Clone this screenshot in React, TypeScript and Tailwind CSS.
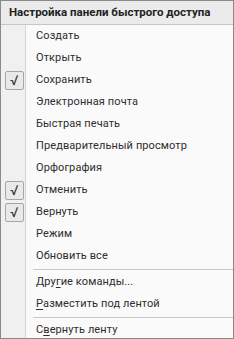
import React from "react";

type Item = { label: React.ReactNode; checked?: boolean } | "sep";

const U = ({ children }: { children: React.ReactNode }) => (
  <span className="underline underline-offset-2">{children}</span>
);

const items: Item[] = [
  { label: "Создать" },
  { label: "Открыть" },
  { label: "Сохранить", checked: true },
  { label: "Электронная почта" },
  { label: "Быстрая печать" },
  { label: "Предварительный просмотр" },
  { label: "Орфография" },
  { label: "Отменить", checked: true },
  { label: "Вернуть", checked: true },
  { label: "Режим" },
  { label: "Обновить все" },
  "sep",
  { label: <>Дру<U>г</U>ие команды...</> },
  { label: <><U>Р</U>азместить под лентой</> },
  "sep",
  { label: <>С<U>в</U>ернуть ленту</> },
];

export default function App() {
  return (
    <div
      className="w-[234px] h-[339px] border border-[#8a8a8a] bg-[#fafafa] flex flex-col overflow-hidden text-[#2e2e2e]"
      style={{ fontFamily: 'Roboto, "Noto Sans", sans-serif' }}
    >
      <div className="h-[24px] shrink-0 bg-[#ebebeb] border-b border-[#c6c6c6] flex items-center pl-[8px] text-[11.5px] font-bold text-[#222] whitespace-nowrap">
        Настройка панели быстрого доступа
      </div>
      <div className="flex-1 flex flex-col">
        {items.map((it, i) =>
          it === "sep" ? (
            <div key={i} className="flex h-[4px]">
              <div className="w-[25px] shrink-0 bg-[#f0f0f0] border-r border-[#d6d6d6]" />
              <div className="flex-1 flex items-center pl-[7px]">
                <div className="h-px w-full bg-[#c8c8c8]" />
              </div>
            </div>
          ) : (
            <div key={i} className="flex h-[22px]">
              <div className="w-[25px] shrink-0 bg-[#f0f0f0] border-r border-[#d6d6d6] flex items-center pl-[4px]">
                {it.checked && (
                  <div className="w-[19px] h-[19px] border border-[#a6a6a6] rounded-[2px] bg-[#e9e9e9] flex items-center justify-center text-[14px] leading-none text-[#333]">
                    √
                  </div>
                )}
              </div>
              <div className="flex-1 flex items-center pl-[10px] text-[11px] tracking-[0.1px] whitespace-nowrap">
                {it.label}
              </div>
            </div>
          )
        )}
        <div className="flex flex-1">
          <div className="w-[25px] shrink-0 bg-[#f0f0f0] border-r border-[#d6d6d6]" />
        </div>
      </div>
    </div>
  );
}
